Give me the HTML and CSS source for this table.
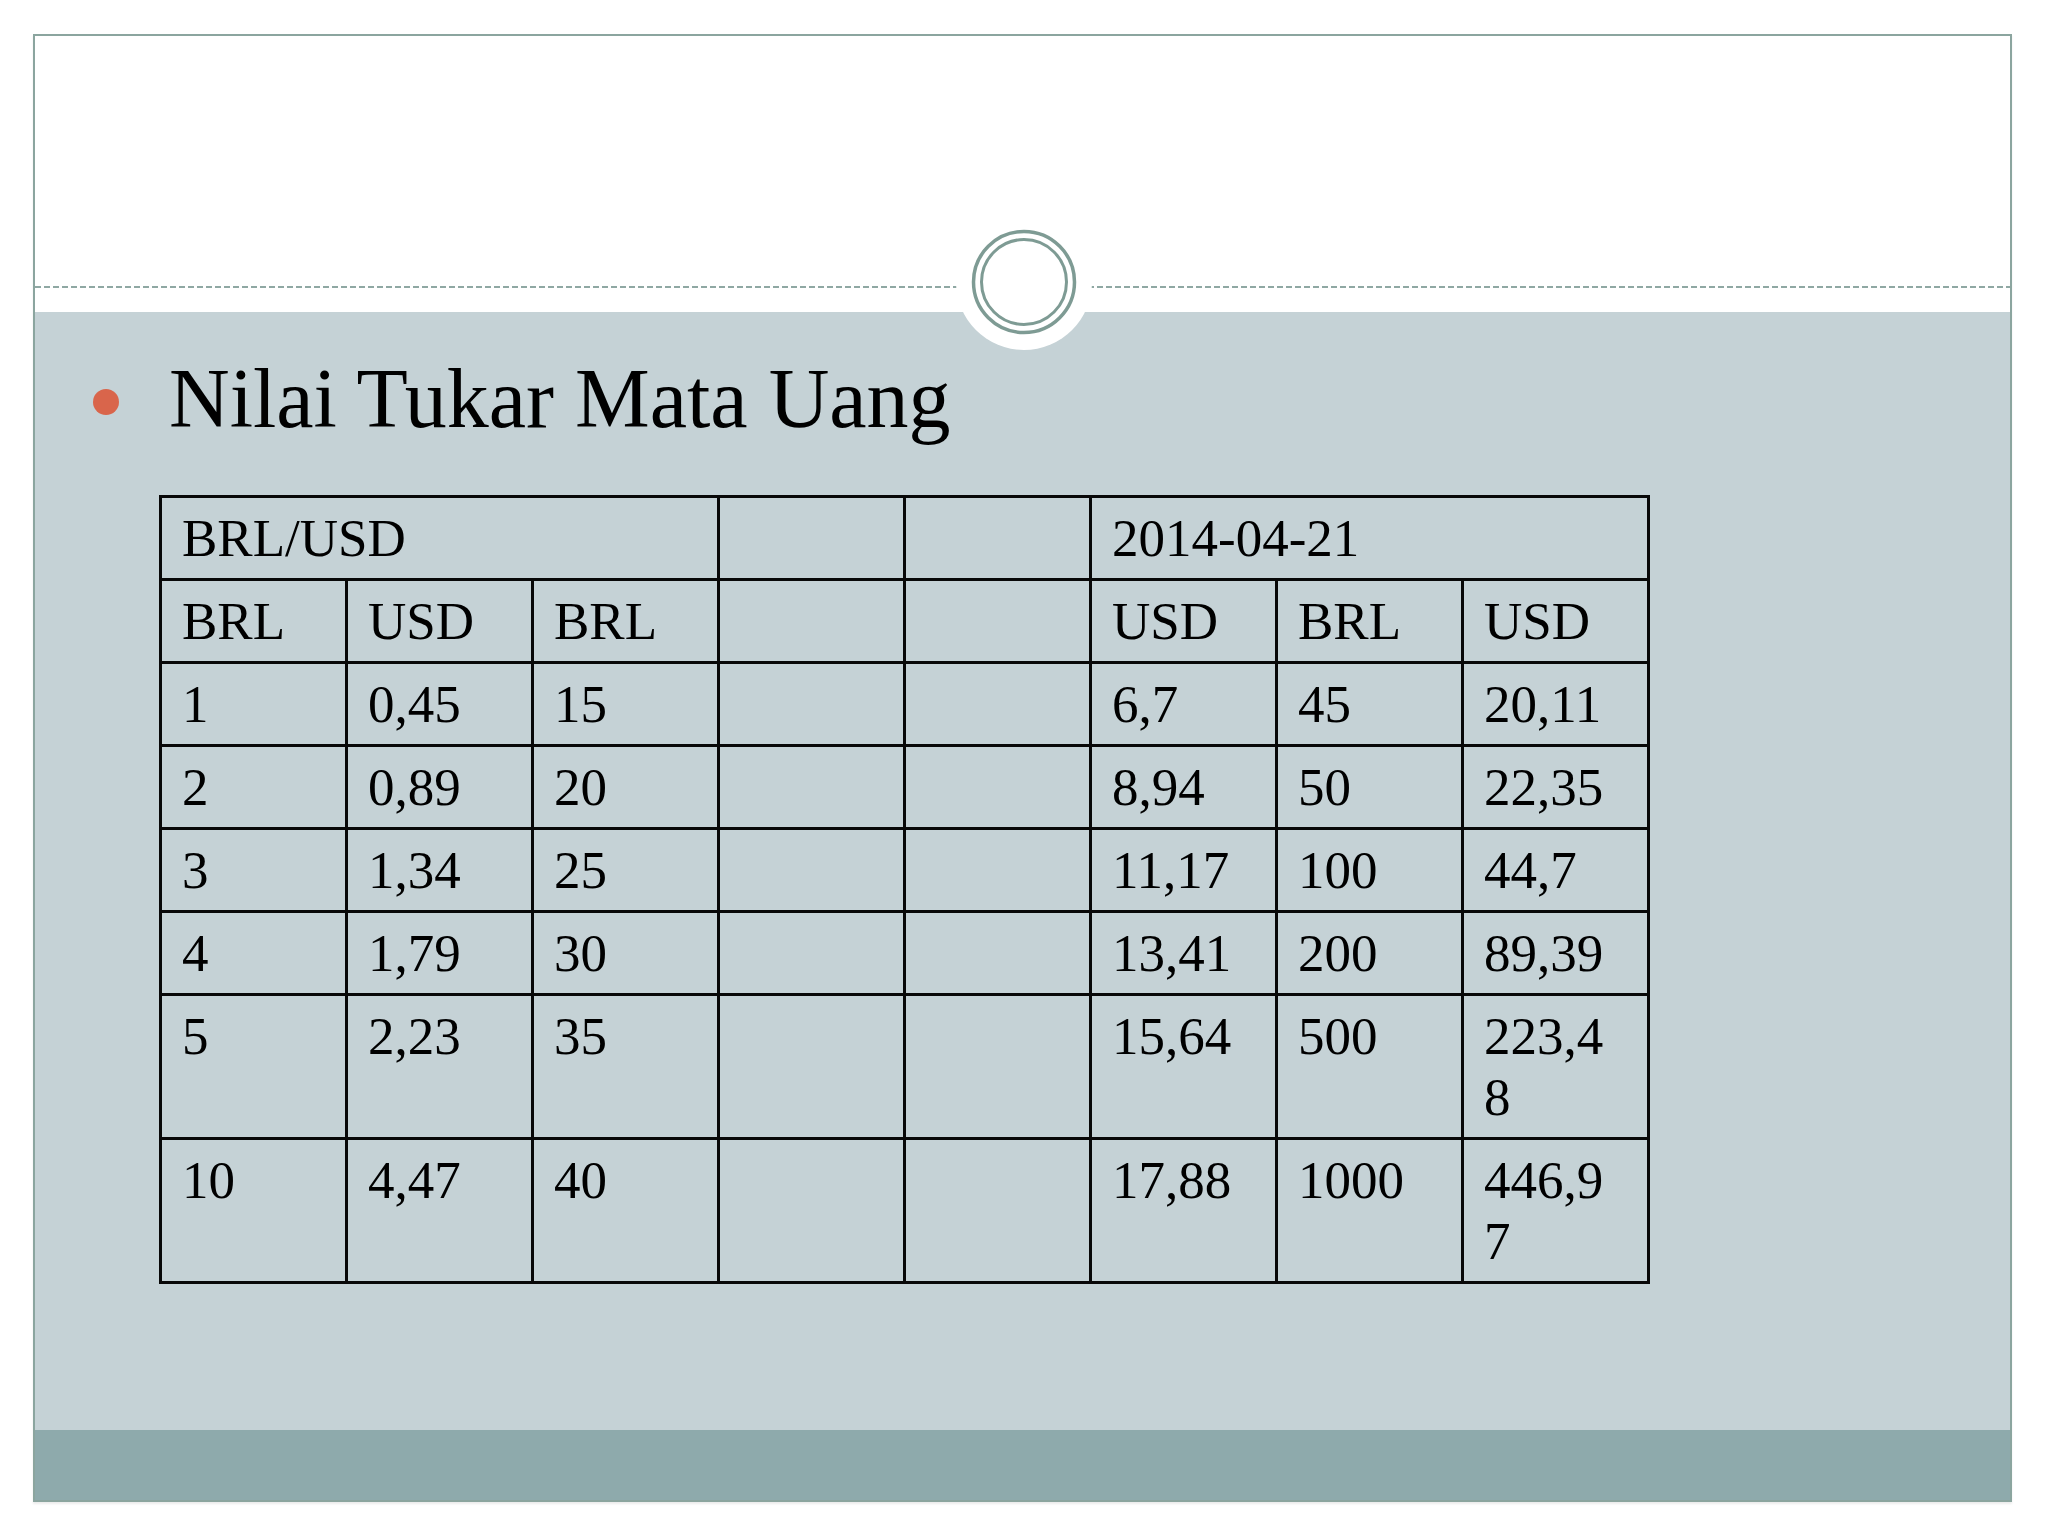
FILE: index.html
```html
<!DOCTYPE html>
<html lang="id">
<head>
<meta charset="utf-8">
<title>Nilai Tukar Mata Uang</title>
<link rel="stylesheet" href="styles.css">
</head>
<body>
<div class="slide">
  <div class="slide-head">
    <div class="dash-line"></div>
  </div>
  <svg class="ring" width="140" height="140" viewBox="0 0 140 140" aria-hidden="true">
    <circle cx="70" cy="70" r="68" fill="#ffffff"/>
    <circle cx="70" cy="70" r="50.5" fill="none" stroke="#7e9b94" stroke-width="3.5"/>
    <circle cx="70" cy="70" r="42.5" fill="none" stroke="#7e9b94" stroke-width="3"/>
  </svg>
  <div class="slide-body">
    <div class="bullet-item">
      <span class="bullet"></span>
      <h1 class="title">Nilai Tukar Mata Uang</h1>
    </div>
    <table class="rates">
      <colgroup>
        <col><col><col><col><col><col><col><col>
      </colgroup>
      <tr><td colspan="3">BRL/USD</td><td></td><td></td><td colspan="3">2014-04-21</td></tr>
      <tr><td>BRL</td><td>USD</td><td>BRL</td><td></td><td></td><td>USD</td><td>BRL</td><td>USD</td></tr>
      <tr><td>1</td><td>0,45</td><td>15</td><td></td><td></td><td>6,7</td><td>45</td><td>20,11</td></tr>
      <tr><td>2</td><td>0,89</td><td>20</td><td></td><td></td><td>8,94</td><td>50</td><td>22,35</td></tr>
      <tr><td>3</td><td>1,34</td><td>25</td><td></td><td></td><td>11,17</td><td>100</td><td>44,7</td></tr>
      <tr><td>4</td><td>1,79</td><td>30</td><td></td><td></td><td>13,41</td><td>200</td><td>89,39</td></tr>
      <tr><td>5</td><td>2,23</td><td>35</td><td></td><td></td><td>15,64</td><td>500</td><td>223,4<br>8</td></tr>
      <tr><td>10</td><td>4,47</td><td>40</td><td></td><td></td><td>17,88</td><td>1000</td><td>446,9<br>7</td></tr>
    </table>
  </div>
  <div class="slide-foot"></div>
</div>
</body>
</html>
```
FILE: styles.css
```css
html, body {
  margin: 0;
  padding: 0;
  background: #ffffff;
}

body {
  width: 2048px;
  height: 1536px;
  overflow: hidden;
  font-family: "Liberation Serif", "DejaVu Serif", serif;
  color: #000000;
}

.slide {
  position: relative;
  box-sizing: border-box;
  width: 1979px;
  height: 1468px;
  margin: 34px 0 0 33px;
  border: 2px solid #8ba59f;
  display: flex;
  flex-direction: column;
  box-shadow: 0 2px 2px rgba(0, 0, 0, 0.08);
}

.slide-head {
  height: 276px;
  background: #ffffff;
  padding-top: 250px;
  box-sizing: border-box;
}

.dash-line {
  height: 2px;
  background: repeating-linear-gradient(to right, #8fa8a3 0 6px, transparent 6px 9px);
}

.ring {
  position: absolute;
  left: 919px;
  top: 176px;
}

.slide-body {
  height: 1118px;
  background: #c5d2d6;
  box-sizing: border-box;
  padding: 38px 0 0 0;
  display: flex;
  flex-direction: column;
}

.bullet-item {
  display: flex;
  align-items: center;
}

.bullet {
  width: 26px;
  height: 26px;
  border-radius: 50%;
  background: #d9654b;
  margin-left: 58px;
  margin-right: 50px;
  margin-top: 6px;
  flex: none;
}

.title {
  margin: 0;
  font-size: 84px;
  font-weight: normal;
  line-height: 98px;
  letter-spacing: 0;
}

.rates {
  margin: 47px 0 0 124px;
  width: 1489px;
  table-layout: fixed;
  border-collapse: collapse;
  border: 3px solid #080808;
}

.rates col {
  width: 186px;
}

.rates td {
  border: 3px solid #080808;
  padding: 10px 20px 9px 20px;
  font-size: 53px;
  line-height: 61px;
  vertical-align: top;
  white-space: nowrap;
}

.slide-foot {
  height: 70px;
  background: #8eaaac;
}
```
